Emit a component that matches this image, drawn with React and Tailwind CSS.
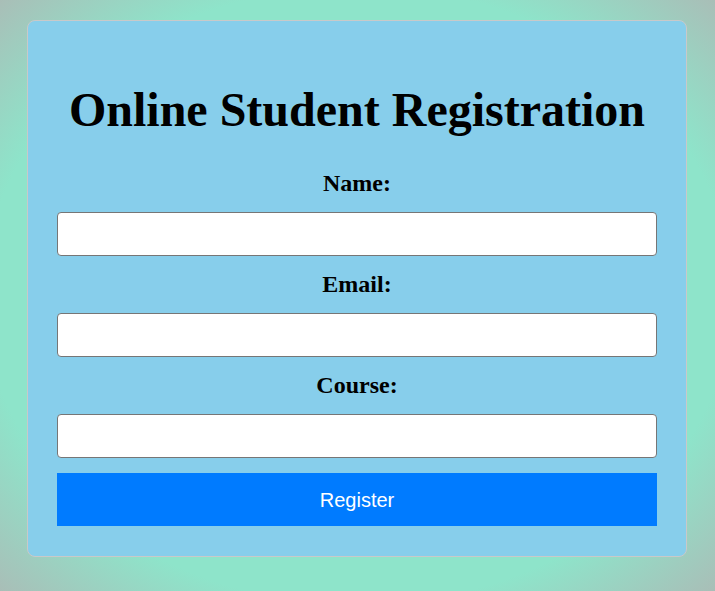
export default function App() {
  return (
    <div className="min-h-[591px] w-full bg-[radial-gradient(ellipse_at_center,#8ee4ca_0%,#8ee4ca_74%,#a9beb7_100%)] pt-[20px] font-['Liberation_Serif',serif]">
      <div className="ml-[27px] w-[660px] rounded-[8px] border border-[#c9c9c9] bg-[#87ceeb] px-[29px] pt-[62px] pb-[30px]">
        <h1 className="text-center text-[48px] font-bold leading-[53px] text-black">
          Online Student Registration
        </h1>
        <form className="mt-[34px] flex flex-col" onSubmit={(e) => e.preventDefault()}>
          {["Name:", "Email:", "Course:"].map((l) => (
            <div key={l} className="flex flex-col">
              <label className="block text-center text-[24px] font-bold leading-[27px] text-black">{l}</label>
              <input
                type="text"
                className="mt-[15px] mb-[15px] h-[44px] w-full rounded-[4px] border border-[#767676] bg-white px-[10px] outline-none"
              />
            </div>
          ))}
          <button
            type="submit"
            className="h-[53px] w-full bg-[#007bff] font-['Liberation_Sans',Arial,sans-serif] text-[20px] text-white"
          >
            Register
          </button>
        </form>
      </div>
    </div>
  );
}
